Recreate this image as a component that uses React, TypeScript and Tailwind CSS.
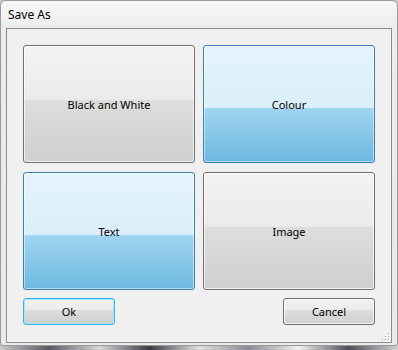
import React from 'react';

type TileProps = { label: string; selected?: boolean };

const Tile: React.FC<TileProps> = ({ label, selected }) => (
    <button
        className={
            selected
                ? "relative h-[118px] rounded-[3px] border border-[#3c7fb1] bg-[linear-gradient(to_bottom,#e5f4fc_0%,#d9effa_53%,#9fd4f0_54%,#6eb9e1_100%)] shadow-[inset_0_0_0_1px_rgba(255,255,255,0.5)] text-[11px] pt-[3px] text-black"
                : "relative h-[118px] rounded-[3px] border border-[#707070] bg-[linear-gradient(to_bottom,#f3f3f3_0%,#ebebeb_46%,#dddddd_47%,#cfcfcf_100%)] shadow-[inset_0_0_0_1px_rgba(255,255,255,0.7)] text-[11px] pt-[3px] text-black"
        }
    >
        {label}
    </button>
);

const App: React.FC = () => {
    return (
        <div className="w-[398px] h-[350px] overflow-hidden bg-[linear-gradient(to_right,#c8c8c8,#5a5a66,#d8d8d8,#3c3c48,#e0e0e0,#8a8a96,#f0f0f0,#50505c,#d0d0d0)] font-['Noto_Sans',sans-serif]">
            {/* window */}
            <div className="h-[346px] rounded-t-[6px] rounded-b-[3px] border border-[#9a9a9a] bg-[linear-gradient(to_bottom,#f7f7f7,#ececec_30px,#eaeaea)] flex flex-col">
                <div className="h-[27px] flex items-center pl-[7px] text-[12px] text-black">Save As</div>
                <div className="mx-[5px] mb-[2px] flex-1 border border-[#8c8c8c] bg-[#f0f0f0] relative">
                    <div className="pl-[16px] pt-[16px] grid grid-cols-[172px_172px] gap-x-[8px] gap-y-[9px]">
                        <Tile label="Black and White" />
                        <Tile label="Colour" selected />
                        <Tile label="Text" selected />
                        <Tile label="Image" />
                    </div>
                    <div className="ml-[16px] w-[352px] pt-[8px] flex justify-between">
                        <button className="w-[92px] h-[27px] rounded-[3px] border border-[#38b4f0] bg-[linear-gradient(to_bottom,#f2f2f2_0%,#ebebeb_45%,#dddddd_46%,#cfcfcf_100%)] shadow-[inset_0_0_0_1px_#a8e4fa] text-[11px] pt-[1px] text-black">Ok</button>
                        <button className="w-[92px] h-[27px] rounded-[3px] border border-[#707070] bg-[linear-gradient(to_bottom,#f2f2f2_0%,#ebebeb_45%,#dddddd_46%,#cfcfcf_100%)] shadow-[inset_0_0_0_1px_rgba(255,255,255,0.7)] text-[11px] pt-[1px] text-black">Cancel</button>
                    </div>
                    {/* resize grip */}
                    <svg className="absolute right-[1px] bottom-[1px]" width="10" height="10" viewBox="0 0 10 10">
                        {[[8, 2], [8, 5], [5, 5], [8, 8], [5, 8], [2, 8]].map(([x, y], i) => (
                            <g key={i}>
                                <rect x={x} y={y} width="1" height="1" fill="#a0a0a0" />
                                <rect x={x + 1} y={y + 1} width="1" height="1" fill="#ffffff" />
                            </g>
                        ))}
                    </svg>
                </div>
            </div>
        </div>
    );
};

export default App;
